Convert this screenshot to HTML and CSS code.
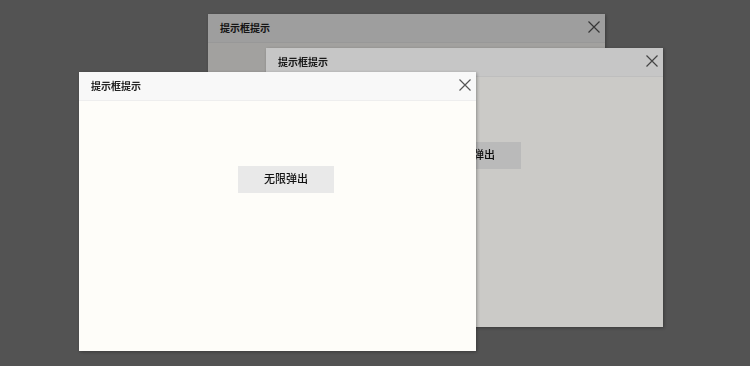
FILE: index.html
```html
<!DOCTYPE html>
<html>
<head>
    <meta http-equiv="Content-Type" content="text/html; charset=UTF-8">
    <link rel="stylesheet" href="styles.css">
</head>
<body>
    <div class="layer" id="layer1">
        <div class="layer-title">提示框提示</div>
        <span class="layer-close"><svg width="12" height="12" viewBox="0 0 12 12"><path d="M0.5 0.5 L11.5 11.5 M11.5 0.5 L0.5 11.5" /></svg></span>
        <div class="layer-content"><button class="btn">无限弹出</button></div>
    </div>
    <div class="shade"></div>

    <div class="layer" id="layer2">
        <div class="layer-title">提示框提示</div>
        <span class="layer-close"><svg width="12" height="12" viewBox="0 0 12 12"><path d="M0.5 0.5 L11.5 11.5 M11.5 0.5 L0.5 11.5" /></svg></span>
        <div class="layer-content"><button class="btn">无限弹出</button></div>
    </div>
    <div class="shade"></div>

    <div class="layer" id="layer3">
        <div class="layer-title">提示框提示</div>
        <span class="layer-close"><svg width="12" height="12" viewBox="0 0 12 12"><path d="M0.5 0.5 L11.5 11.5 M11.5 0.5 L0.5 11.5" /></svg></span>
        <div class="layer-content"><button class="btn">无限弹出</button></div>
    </div>
</body>
</html>
```

FILE: styles.css
```css
html, body {
    margin: 0;
    height: 100%;
}

body {
    background-color: #838383;
    font-family: "Noto Sans CJK SC", "Noto Sans", sans-serif;
    color: #333;
    overflow: hidden;
}

.shade {
    position: fixed;
    left: 0;
    top: 0;
    width: 100%;
    height: 100%;
    background-color: rgba(0, 0, 0, 0.2);
}

.layer {
    position: absolute;
    width: 397px;
    height: 279px;
    background-color: #fefdf9;
    box-shadow: 1px 1px 3px rgba(0, 0, 0, 0.3);
    display: flex;
    flex-direction: column;
}

#layer1 {
    left: 208px;
    top: 14px;
}

#layer2 {
    left: 266px;
    top: 48px;
}

#layer3 {
    left: 79px;
    top: 72px;
}

.layer-title {
    height: 28px;
    line-height: 28px;
    padding-left: 12px;
    background-color: #f8f8f8;
    border-bottom: 1px solid #eeeeee;
    font-size: 10px;
    font-weight: bold;
    color: #222;
}

.layer-close {
    position: absolute;
    right: 5px;
    top: 7px;
    width: 12px;
    height: 12px;
}

.layer-close svg {
    display: block;
}

.layer-close path {
    stroke: #555;
    stroke-width: 1.2;
    fill: none;
}

.layer-content {
    flex: 1;
    padding: 65px 0 0 159px;
}

.btn {
    display: block;
    width: 96px;
    height: 27px;
    border: none;
    background-color: #e9e9e9;
    color: #111;
    font-family: "Noto Sans CJK SC", "Noto Sans", sans-serif;
    font-size: 11px;
    font-weight: 500;
    line-height: 25px;
    padding: 0 0 2px 0;
    cursor: pointer;
}
```
